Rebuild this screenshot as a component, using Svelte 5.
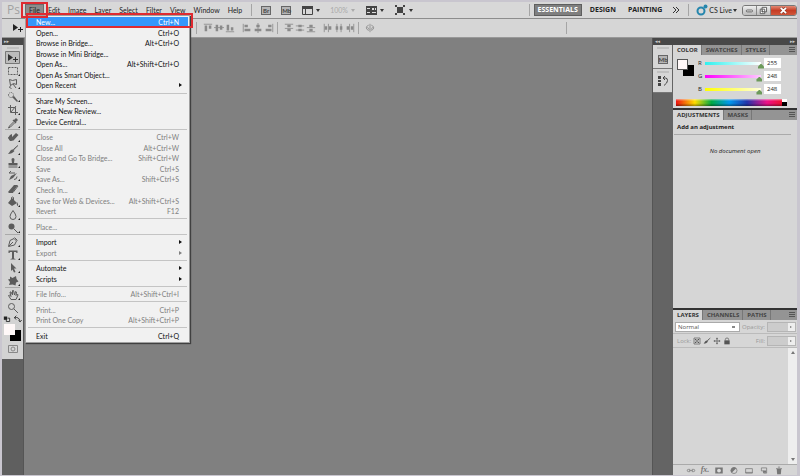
<script>
	const menus = ['File', 'Edit', 'Image', 'Layer', 'Select', 'Filter', 'View', 'Window', 'Help'];

	// label, shortcut, disabled, has submenu
	const fileMenu = [
		[
			['New...', 'Ctrl+N'],
			['Open...', 'Ctrl+O'],
			['Browse in Bridge...', 'Alt+Ctrl+O'],
			['Browse in Mini Bridge...', ''],
			['Open As...', 'Alt+Shift+Ctrl+O'],
			['Open As Smart Object...', ''],
			['Open Recent', '', false, true],
		],
		[
			['Share My Screen...', ''],
			['Create New Review...', ''],
			['Device Central...', ''],
		],
		[
			['Close', 'Ctrl+W', true],
			['Close All', 'Alt+Ctrl+W', true],
			['Close and Go To Bridge...', 'Shift+Ctrl+W', true],
			['Save', 'Ctrl+S', true],
			['Save As...', 'Shift+Ctrl+S', true],
			['Check In...', '', true],
			['Save for Web & Devices...', 'Alt+Shift+Ctrl+S', true],
			['Revert', 'F12', true],
		],
		[['Place...', '', true]],
		[
			['Import', '', false, true],
			['Export', '', true, true],
		],
		[
			['Automate', '', false, true],
			['Scripts', '', false, true],
		],
		[['File Info...', 'Alt+Shift+Ctrl+I', true]],
		[
			['Print...', 'Ctrl+P', true],
			['Print One Copy', 'Alt+Shift+Ctrl+P', true],
		],
		[['Exit', 'Ctrl+Q']],
	];

	// f = filled path, s = stroked path
	const icons = {
		move: { f: 'M1 2l5 3.5-5 3.5z', s: 'M6 7.5h5M8.500 5v5' },
		marquee: { s: 'M1.500 2.500h9v7h-9z', dash: '2 1' },
		lasso: { s: 'M2.500 1.500l3 1 4-1v5l-3-1-3 2zM3.500 7.500l-1 2 2 1M6 6l3 4' },
		quick: { s: 'M1.500 4a2.500 2.500 0 1 1 5 0a2.500 2.500 0 1 1-5 0', f: 'M5 6l2-1 4 5-1 1z', dash: '1 1' },
		crop: { s: 'M3.500 1v7.500H11M1 3.500h7.500V11M4 8l5-6' },
		dropper: { f: 'M7 3l2-2 2 2-2 2 .5.5-1 1-3-3 1-1z', s: 'M6.500 5l-4 4-1 2 2-1 4-4' },
		heal: { f: 'M5 6l4-4 2.500 2-5 5.500L3 10 1 7l2-3 2-1z', s: 'M1.500 6.500l3 3.500' },
		brush: { f: 'M11 1L7 6 6 5.500zM6 5.500L7.500 7Q5 10 1 10 2.500 8 3.500 6.500 5 5 6 5.500z', s: 'M6.500 5.500L11 1.500' },
		stamp: { f: 'M4.500 2.500a1.500 1.500 0 0 1 3 0L7 6h3.500v2.500h-9V6H5zM1.500 9.500h9v1h-9z' },
		history: { f: 'M10 3L6 8 2 10l2-4z', s: 'M2 3h6M2 3l2-2M7 9.500q3 0 3-3' },
		eraser: { f: 'M7 2h4L6 9H1z', s: 'M1.500 9.500H6L11 3' },
		bucket: { f: 'M5 2l5 5-5 3-4-3zM10 6q2 3 .5 4-1-1-.5-4', s: 'M4.500 5V1.500q1-1 2 0V5' },
		blur: { s: 'M6 1.500q-3 4-3 6a3 3 0 0 0 6 0q0-2-3-6z' },
		dodge: { f: 'M1.500 4.500a3 3 0 1 1 6 0a3 3 0 1 1-6 0', s: 'M7 7l4 4' },
		pen: { s: 'M1.500 10.500l1.500-6L7 2.500 9.500 5 7.500 9zM2 10l4-4M7.500 1.500l3 3' },
		type: { f: 'M1.500 1.500h9v2.500h-1l-.5-1H7v6.500l1.500.5v.500h-5v-.5L5 9.500V3H3l-.5 1h-1z' },
		path: { f: 'M4 1l5.500 5.500H7L8.500 10l-1.500.5L5.500 7.500 4 9z' },
		shape: { f: 'M3 1.500l2.500 1.500L9 1l.5 3 2 2.500-2.500 1-.5 3-3-1-3.500.5 1-3L1 4.500 3 4z' },
		hand: { s: 'M4 10.500L1.500 6.500l1-.5L4 7.500 3 3h1l1.500 3V1.500h1L7.500 6 8.500 2.500l1 .5-.5 3.500 1.500-1.500.500 1-2 4.500z' },
		zoom: { s: 'M1.500 4.500a3 3 0 1 1 6 0a3 3 0 1 1-6 0M7 7l4 4' },
		mini: { f: 'M1 3h4v4H1z', s: 'M4 6.500V9h4V5H5.500' },
		swap: { s: 'M2 4.500q5-1.500 6.500 4M4 2L1.500 4.500 4 6.500M6.500 7.500l2 2 2-2' },
		mask: { s: 'M1.500 2.500h9v7h-9zM4 6a2 2 0 1 1 4 0a2 2 0 1 1-4 0' },
		alignTop: { s: 'M1 1.500h10', f: 'M2 3h3v7H2zM7 3h3v4H7z' },
		alignMiddle: { s: 'M0 5.500h12', f: 'M2 2h3v8H2zM7 3h3v5H7z' },
		alignBottom: { s: 'M1 10.500h10', f: 'M2 2h3v7H2zM7 5h3v4H7z' },
		alignLeft: { s: 'M1.500 1v10', f: 'M3 2h4v3H3zM3 7h7v3H3z' },
		alignCenter: { s: 'M6 0v12', f: 'M4 2h4v3H4zM2 7h8v3H2z' },
		alignRight: { s: 'M10.500 1v10', f: 'M5 2h4v3H5zM2 7h7v3H2z' },
		distTop: { s: 'M1 1.500h10M1 6.500h10', f: 'M4 2h4v3H4zM4 7h4v3H4z' },
		distMiddle: { s: 'M1 3.500h10M1 8.500h10', f: 'M4 2h4v3H4zM4 7h4v3H4z' },
		distBottom: { s: 'M1 5.500h10M1 10.500h10', f: 'M4 2h4v3H4zM4 7h4v3H4z' },
		distLeft: { s: 'M1.500 1v10M6.500 1v10', f: 'M2 4h3v4H2zM7 4h3v4H7z' },
		distCenter: { s: 'M3.500 1v10M8.500 1v10', f: 'M2 4h3v4H2zM7 4h3v4H7z' },
		distRight: { s: 'M5.500 1v10M10.500 1v10', f: 'M2 4h3v4H2zM7 4h3v4H7z' },
		auto: { s: 'M6 1v10M4.500 2.500Q1 4 1.500 6t3 3M7.500 2.500Q11 4 10.500 6t-3 3M3 5l2 3M9 5L7.500 8' },
		frames: { s: 'M1.500 2.500h10v8h-10zM4.500 2.500v8M1.500 4.500h10', f: 'M1 2h11v2H1z' },
		arrange: { f: 'M1 2h11v9H1z', hole: 'M7 4h2v2H7zM10 4h1v2h-1zM7 8h4v1H7zM2 4h3v1H2zM2 8h3v1H2z' },
		screen: { f: 'M3 3h6v6H3z', s: 'M1 1.500h2M1.500 1v2M9 1.500h2M10.500 1v2M1 10.500h2M1.500 9v2M9 10.500h2M10.500 9v2M2 2l2 2M10 2L8 4M2 10l2-2M10 10L8 8' },
		link: { s: 'M5 4.500H2.500a1.500 1.500 0 0 0 0 3H5M7 4.500h2.500a1.500 1.500 0 0 1 0 3H7M3.500 6h5' },
		maskFill: { f: 'M1 2h10v8H1z', hole: 'M3.500 6a2.500 2.500 0 1 1 5 0a2.500 2.500 0 1 1-5 0' },
		adjust: { s: 'M2 6a4 4 0 1 1 8 0a4 4 0 1 1-8 0', f: 'M9 3L3 9A4 4 0 0 1 9 3z' },
		folder: { s: 'M1.500 3.500h9v6h-9zM1.500 8.500h9' },
		page: { s: 'M2.500 2.500h7v7h-4v-3h-3z', f: 'M5 6h4v3H5z' },
		trash: { f: 'M3 4h6L8.500 11h-5z', s: 'M2 3.500h8M4.500 1.500h3' },
		checker: { s: 'M1.500 1.500h9v9h-9z', f: 'M3 3h2v2H3zM7 3h2v2H7zM5 5h2v2H5zM3 7h2v2H3zM7 7h2v2H7z' },
		cross: { s: 'M6 1v10M1 6h10M4.500 2.500h3M4.500 9.500h3M2.500 4.500v3M9.500 4.500v3' },
		lock: { f: 'M2 5h8v6H2z', s: 'M3.500 5V3.500q0-2 2.500-2t2.500 2V5' },
		paragraph: { f: 'M1 1h3v3H1zM1 5h3v2H1zM1 8h3v3H1z', s: 'M6 3h2.500q2 0 2 2.500T7 10.500M8 1L6 3l2 2' },
	};

	const tools = [
		['move', 'marquee', 'lasso', 'quick', 'crop', 'dropper'],
		['heal', 'brush', 'stamp', 'history', 'eraser', 'bucket', 'blur', 'dodge'],
		['pen', 'type', 'path', 'shape'],
		['hand', 'zoom'],
	];

	const aligns = [
		['alignTop', 'alignMiddle', 'alignBottom'],
		['alignLeft', 'alignCenter', 'alignRight'],
	];

	const distributes = [
		['distTop', 'distMiddle', 'distBottom'],
		['distLeft', 'distCenter', 'distRight'],
	];

	let channels = $state([
		{ name: 'R', value: 255 },
		{ name: 'G', value: 248 },
		{ name: 'B', value: 248 },
	]);
</script>

{#snippet icon(name)}
	<svg class="icon" viewBox="0 0 12 12" aria-hidden="true">
		{#if icons[name].f}<path d={icons[name].f} fill="currentColor" />{/if}
		{#if icons[name].hole}<path d={icons[name].hole} fill="#dcdcdc" />{/if}
		{#if icons[name].s}<path d={icons[name].s} fill="none" stroke="currentColor" stroke-dasharray={icons[name].dash} />{/if}
	</svg>
{/snippet}

{#snippet sets(groups)}
	{#each groups as set}
		<div class="set">
			{#each set as name}<button aria-label={name}>{@render icon(name)}</button>{/each}
		</div>
	{/each}
{/snippet}

{#snippet tabs(names)}
	<div class="tabs" role="tablist">
		{#each names as name, i}
			<button role="tab" aria-selected={i === 0}>{name}</button>
		{/each}
		<button class="flyout" aria-label="Panel menu"></button>
	</div>
{/snippet}

<div class="app">
	<header class="menubar">
		<span class="ps">Ps</span>
		<nav class="menus">
			{#each menus as name, i}
				<div class="menu-item">
					<button class:open={i === 0}>{name}</button>
					{#if i === 0}
						<div class="marker file-marker"></div>
						<div class="dropdown" role="menu">
							{#each fileMenu as group, g}
								{#if g > 0}<hr />{/if}
								{#each group as [label, keys, disabled, sub]}
									<button role="menuitem" class:active={label === 'New...'} {disabled}>
										<span>{label}</span>
										<span class:sub>{keys}</span>
									</button>
								{/each}
							{/each}
							<div class="marker new-marker"></div>
						</div>
					{/if}
				</div>
			{/each}
		</nav>
		<i class="rule"></i>
		<div class="appbar">
			<button class="tile">Br</button>
			<button class="tile">Mb</button>
			<button class="drop" aria-label="View extras">{@render icon('frames')}</button>
			<button class="drop faint">100%</button>
			<button class="drop" aria-label="Arrange documents">{@render icon('arrange')}</button>
			<button class="drop" aria-label="Screen mode">{@render icon('screen')}</button>
		</div>
		<div class="workspaces">
			<i class="rule"></i>
			<button class="current">ESSENTIALS</button>
			<button>DESIGN</button>
			<button>PAINTING</button>
			<button class="more" aria-label="More workspaces">
				<svg viewBox="0 0 8 8" aria-hidden="true"><path d="M1 1l3 3-3 3M4 1l3 3-3 3" fill="none" stroke="#333" /></svg>
			</button>
		</div>
		<i class="rule"></i>
		<button class="cslive drop">
			<svg viewBox="0 0 12 12" aria-hidden="true">
				<circle cx="5" cy="7" r="3.500" fill="none" stroke="#2586ad" stroke-width="2" />
				<circle cx="9.500" cy="2.500" r="2" fill="#2586ad" />
			</svg>
			CS Live
		</button>
		<div class="window-buttons">
			<button aria-label="Minimize"><svg viewBox="0 0 12 10"><rect x="2.500" y="4.500" width="7" height="2" rx="1" fill="#fff" stroke="#555" /></svg></button>
			<button aria-label="Restore"><svg viewBox="0 0 12 10"><path d="M4.500 1.500h5v5h-5zM2.500 3.500h5v5h-5zM4.500 5.500h1v1h-1z" fill="#fff" stroke="#555" /></svg></button>
			<button class="close" aria-label="Close"><svg viewBox="0 0 12 10"><path d="M3 2l6 6M9 2L3 8" stroke="#803428" stroke-width="3" /><path d="M3 2l6 6M9 2L3 8" stroke="#fff" stroke-width="2" /></svg></button>
		</div>
	</header>

	<div class="options">
		<span class="current-tool">{@render icon('move')}</span>
		<i class="rule"></i>
		{@render sets(aligns)}
		<i class="rule"></i>
		{@render sets(distributes)}
		<i class="rule"></i>
		{@render sets([['auto']])}
		<i class="rule last"></i>
	</div>

	<main>
		<aside class="tools">
			<div class="strip"><span>▸▸</span></div>
			<div class="toolbox">
				{#each tools as group, g}
					{#if g > 0}<hr />{/if}
					{#each group as name}
						<button class="tool" class:selected={name === 'move'} class:corner={name !== 'move' && name !== 'zoom'} aria-label={name}>
							{@render icon(name)}
						</button>
					{/each}
				{/each}
				<div class="mini">{@render icon('mini')}{@render icon('swap')}</div>
				<div class="swatches"><b></b><i></i></div>
				<button class="tool quickmask" aria-label="Quick mask">{@render icon('mask')}</button>
			</div>
		</aside>

		<section class="canvas"></section>

		<div class="docks">
			<div class="strip"><span>◂◂</span><span>▸▸</span></div>
			<div class="columns">
				<aside class="icon-dock">
					<button aria-label="Mini Bridge"><span class="tile">Mb</span></button>
					<button aria-label="History">{@render icon('paragraph')}</button>
				</aside>
				<aside class="panels">
					<section class="panel color">
						{@render tabs(['COLOR', 'SWATCHES', 'STYLES'])}
						<div class="sliders">
							<div class="swatches"><b></b><i></i></div>
							<div class="channels">
								{#each channels as c}
									<div class="channel">
										<label for="ch-{c.name}">{c.name}</label>
										<div class="track {c.name}">
											<input type="range" min="0" max="255" aria-label="{c.name} level" bind:value={c.value} />
										</div>
										<input id="ch-{c.name}" class="number" type="text" bind:value={c.value} />
									</div>
								{/each}
							</div>
						</div>
						<div class="ramp"><span></span></div>
					</section>

					<section class="panel adjustments">
						{@render tabs(['ADJUSTMENTS', 'MASKS'])}
						<h2>Add an adjustment</h2>
						<p>No document open</p>
					</section>

					<section class="panel layers">
						{@render tabs(['LAYERS', 'CHANNELS', 'PATHS'])}
						<div class="row">
							<select aria-label="Blend mode"><option>Normal</option></select>
							<label for="opacity">Opacity:</label>
							<span class="amount"><input id="opacity" disabled /><i></i></span>
						</div>
						<div class="row locks">
							<span>Lock:</span>
							{#each ['checker', 'brush', 'cross', 'lock'] as name}
								<button aria-label="Lock {name}">{@render icon(name)}</button>
							{/each}
							<label for="fill">Fill:</label>
							<span class="amount"><input id="fill" disabled /><i></i></span>
						</div>
						<div class="list"><div class="scroll"></div></div>
						<footer>
							<button aria-label="Link layers">{@render icon('link')}</button>
							<button class="fx">fx.</button>
							{#each ['maskFill', 'adjust', 'folder', 'page', 'trash'] as name}
								<button aria-label={name}>{@render icon(name)}</button>
							{/each}
						</footer>
					</section>
				</aside>
			</div>
		</div>
	</main>
</div>

<style>
	:global(body) {
		background: #808080;
	}

	.app {
		display: flex;
		flex-direction: column;
		box-sizing: border-box;
		min-height: 100vh;
		border: solid #c9c6cf;
		border-width: 2px 3px 1px 2px;
		font: 7px/10px Lato, "Open Sans", sans-serif;
		color: #222;
	}

	button, input, select {
		box-sizing: border-box;
		margin: 0;
		padding: 0;
		border: 0;
		background: none;
		font: inherit;
		color: inherit;
	}

	hr {
		margin: 0;
		border: 0;
	}

	.icon {
		display: block;
		width: 12px;
		height: 12px;
	}

	.rule {
		width: 1px;
		height: 12px;
		background: #a5a5a5;
	}

	.menubar {
		display: flex;
		align-items: center;
		height: 16px;
		background: #d8d8d8;
		border-bottom: 1px solid #8d8d8d;
	}

	.ps {
		width: 23px;
		padding-left: 5px;
		box-sizing: border-box;
		font-family: "Open Sans", sans-serif;
		font-size: 12px;
		color: #a2a2a2;
	}

	.menus {
		display: flex;
		margin-right: 5px;
	}

	.menu-item {
		position: relative;
	}

	.menu-item > button {
		padding: 0 4px;
		line-height: 12px;
	}

	.menu-item > .open {
		background: #8c8c8c;
		box-shadow: inset 0 0 0 1px #6c6c6c;
	}

	.marker {
		position: absolute;
		border: 2px solid #df2a30;
		pointer-events: none;
	}

	.file-marker {
		inset: -2px -4px;
		z-index: 3;
	}

	.dropdown {
		position: absolute;
		top: 11px;
		left: 0;
		z-index: 2;
		display: flex;
		flex-direction: column;
		box-sizing: border-box;
		width: 165px;
		height: 328px;
		padding: 1px;
		background: #f1f1f1;
		border: 1px solid #a0a0a0;
		box-shadow: 1px 1px 1px #404040;
	}

	.dropdown button {
		display: flex;
		flex: 1;
		align-items: center;
		justify-content: space-between;
		padding: 0 9px;
		min-height: 0;
		line-height: 10px;
		color: #111;
	}

	.dropdown button:disabled {
		color: #808080;
	}

	.dropdown .active {
		background: #3597fb;
		color: #fff;
	}

	.dropdown hr {
		height: 1px;
		margin: 2px 1px;
		background: #c4c4c4;
	}

	.sub::after {
		content: "";
		display: block;
		margin-right: -5px;
		border: 2px solid transparent;
		border-left: 3px solid;
		border-right: 0;
	}

	.new-marker {
		top: -3px;
		left: 0;
		right: -4px;
		height: 11px;
	}

	.appbar {
		display: flex;
		align-items: center;
		gap: 10px;
		margin-left: 9px;
		color: #444;
	}

	.tile {
		width: 10px;
		height: 9px;
		background: #b5b5b5;
		border: 1px solid #666;
		font-size: 6px;
		font-weight: 700;
		line-height: 7px;
	}

	.drop {
		display: flex;
		align-items: center;
		gap: 3px;
	}

	.drop::after {
		content: "";
		border: 2px solid transparent;
		border-top: 3px solid #333;
		border-bottom: 0;
	}

	.faint {
		color: #aaa;
	}

	.faint::after {
		border-top-color: #aaa;
	}

	.workspaces {
		display: flex;
		align-items: center;
		gap: 4px;
		margin: 0 4px 0 auto;
		font-family: "Open Sans", sans-serif;
		font-weight: 700;
	}

	.workspaces button {
		padding: 0 4px;
		line-height: 12px;
	}

	.workspaces .current {
		background: #7f7f7f;
		box-shadow: inset 0 0 0 1px #5e5e5e;
		color: #fff;
	}

	.workspaces .more {
		padding-left: 2px;
	}

	.more svg {
		display: block;
		width: 8px;
		height: 8px;
	}

	.cslive {
		margin: 0 5px 0 7px;
		gap: 1px;
	}

	.cslive svg {
		width: 12px;
		height: 12px;
	}

	.window-buttons {
		display: flex;
		border: 1px solid #777;
		border-radius: 3px;
		overflow: hidden;
	}

	.window-buttons button {
		width: 14px;
		height: 9px;
		background: linear-gradient(#eee, #bbb);
		border-right: 1px solid #888;
	}

	.window-buttons .close {
		width: 25px;
		background: linear-gradient(#e28a76, #c63d25 50%, #d0563b);
		border: 0;
	}

	.window-buttons svg {
		display: block;
		height: 9px;
		margin: auto;
	}

	.options {
		display: flex;
		align-items: center;
		height: 18px;
		background: #d6d6d6;
		border-bottom: 1px solid #999;
		color: #8a8a8a;
	}

	.options .set .icon {
		width: 10px;
		height: 10px;
	}

	.current-tool {
		width: 184px;
		padding-left: 10px;
		color: #222;
	}

	.set {
		display: flex;
		gap: 1px;
		margin: 0 1px 0 6px;
	}

	.options .rule {
		margin-left: 2px;
	}

	.options .current-tool + .rule {
		margin-left: 0;
	}

	.options .last {
		margin-left: 190px;
	}

	main {
		display: flex;
		flex: 1;
	}

	.strip {
		display: flex;
		justify-content: space-between;
		height: 7px;
		padding: 0 2px;
		background: #484848;
		color: #ccc;
		font: 5px/6px "DejaVu Sans", sans-serif;
	}

	.tools {
		width: 21px;
		background: #5f5f5f;
		border-right: 1px solid #555;
	}

	.toolbox {
		display: flex;
		flex-direction: column;
		align-items: center;
		padding: 0 0 4px;
		background: #d3d3d3;
	}

	.toolbox::before, .icon-dock button::before {
		content: "";
		width: 12px;
		height: 2px;
		margin: 2px 0;
		background: #c0c0c0;
	}

	.toolbox hr {
		width: 15px;
		height: 1px;
		background: #aaa;
	}

	.tool {
		position: relative;
		display: grid;
		place-items: center;
		width: 15px;
		height: 13px;
		color: #5c5c5c;
	}

	.selected {
		background: #bcbcbc;
		box-shadow: inset 0 0 0 1px #777;
		border-radius: 1px;
		color: #333;
	}

	.corner::after {
		content: "";
		position: absolute;
		right: 0;
		bottom: 1px;
		border: 1px solid #222;
		border-top-color: transparent;
		border-left-color: transparent;
	}

	.mini {
		display: flex;
		color: #222;
	}

	.mini .icon {
		width: 10px;
		height: 10px;
	}

	.swatches {
		display: grid;
		width: 17px;
		height: 17px;
	}

	.swatches b, .swatches i {
		grid-area: 1 / 1;
		width: 11px;
		height: 11px;
	}

	.swatches b {
		z-index: 1;
		background: #fff8f8;
	}

	.swatches i {
		place-self: end;
		background: #000;
	}

	.quickmask {
		margin-top: 1px;
		color: #888;
	}

	.canvas {
		flex: 1;
		background: #808080;
	}

	.docks {
		display: flex;
		flex-direction: column;
		box-sizing: border-box;
		width: 145px;
		border-left: 1px solid #555;
		font-family: "Open Sans", sans-serif;
		font-size: 6px;
	}

	.columns {
		display: flex;
		flex: 1;
	}

	.icon-dock {
		width: 20px;
		background: #646464;
	}

	.icon-dock button {
		display: flex;
		flex-direction: column;
		align-items: center;
		width: 19px;
		height: 24px;
		background: #d6d6d6;
		border-bottom: 1px solid #777;
		color: #444;
	}

	.icon-dock .tile {
		box-sizing: border-box;
		margin-top: 4px;
		font-family: Lato, sans-serif;
	}

	.panels {
		display: flex;
		flex: 1;
		flex-direction: column;
		gap: 2px;
		background: #333;
	}

	.panel {
		background: #d6d6d6;
	}

	.tabs {
		display: flex;
		height: 10px;
		background: #949494;
		font-weight: 700;
		line-height: 10px;
	}

	.tabs button {
		padding: 0 3px 0 4px;
		border-right: 1px solid #777;
		color: #444;
	}

	.tabs [aria-selected="true"] {
		background: #d6d6d6;
		color: #333;
	}

	.tabs .flyout {
		width: 6px;
		height: 5px;
		margin: 2px 2px 0 auto;
		padding: 0;
		border: 0;
		background: repeating-linear-gradient(#555 0 1px, transparent 1px 2px);
	}

	.sliders {
		display: flex;
		gap: 4px;
		padding: 3px 16px 5px 4px;
	}

	.sliders .swatches {
		margin-top: 1px;
	}

	.sliders b {
		box-sizing: border-box;
		border: 1px solid #555;
	}

	.channels {
		display: flex;
		flex: 1;
		flex-direction: column;
		gap: 3px;
	}

	.channel {
		display: flex;
		align-items: center;
	}

	.channel label {
		width: 5px;
		margin-right: 2px;
	}

	.track {
		position: relative;
		flex: 1;
		height: 3px;
	}

	.track.R { background: linear-gradient(90deg, #2ff1ef, #fff); }
	.track.G { background: linear-gradient(90deg, #f0f, #fcf); }
	.track.B { background: linear-gradient(90deg, #ff0, #ffd); }

	.track input {
		position: absolute;
		inset: 2px -3px auto;
		width: calc(100% + 6px);
		height: 5px;
		appearance: none;
	}

	.track input::-webkit-slider-thumb {
		appearance: none;
		width: 6px;
		height: 5px;
		background: #6c9a5a;
		clip-path: polygon(50% 0, 100% 60%, 100% 100%, 0 100%, 0 60%);
	}

	.number {
		width: 17px;
		height: 10px;
		margin-left: 3px;
		padding-left: 3px;
		background: #fff;
	}

	.ramp {
		height: 7px;
		margin: 0 10px 0 3px;
		display: flex;
		justify-content: flex-end;
		background:
			linear-gradient(#fff8, transparent 30%, transparent 60%, #0006),
			linear-gradient(90deg, #e11, #fd0 17%, #0a4 32%, #09e 48%, #23a 64%, #e18 82%, #e11);
	}

	.ramp span {
		width: 5px;
		background: linear-gradient(#fff 50%, #000 50%);
	}

	.color {
		padding-bottom: 2px;
	}

	.adjustments {
		flex: 6;
	}

	h2 {
		margin: 0 6px 0 1px;
		padding: 0 3px;
		border-bottom: 1px solid #aaa;
		font-size: 6px;
		line-height: 14px;
	}

	p {
		margin: 11px 0;
		font-style: italic;
		text-align: center;
	}

	.layers {
		display: flex;
		flex: 5;
		flex-direction: column;
	}

	.row {
		display: flex;
		align-items: center;
		height: 13px;
		padding: 0 1px 0 2px;
		border-bottom: 1px solid #bbb;
		color: #999;
	}

	.row select {
		width: 65px;
		height: 10px;
		margin-right: 2px;
		padding: 0 2px;
		appearance: none;
		border: 1px solid #aaa;
		background: linear-gradient(#888, #888) 94% 50% / 3px 2px no-repeat, #fff;
		line-height: 8px;
		color: #555;
	}

	.amount {
		display: flex;
		width: 27px;
		height: 8px;
		margin-left: auto;
		border: 1px solid #b5b5b5;
	}

	.amount input {
		flex: 1;
		min-width: 0;
		background: #ccc;
	}

	.amount i {
		display: grid;
		place-items: center;
		width: 7px;
		background: #eee;
	}

	.amount i::before {
		content: "";
		border: 1px solid transparent;
		border-left: 2px solid #777;
	}

	.locks {
		gap: 2px;
		padding-left: 4px;
	}

	.locks button {
		width: 8px;
		color: #555;
	}

	.locks .icon {
		width: 8px;
		height: 8px;
	}

	.locks label {
		margin-left: auto;
	}

	.locks .amount {
		margin-left: 0;
	}

	.list {
		display: flex;
		flex: 1;
		justify-content: flex-end;
	}

	.scroll {
		display: flex;
		width: 9px;
		flex-direction: column;
		align-items: center;
		justify-content: space-between;
		background: #eee;
	}

	.scroll::before, .scroll::after {
		content: "";
		margin: 3px;
		border: 2px solid transparent;
		border-top: 0;
		border-bottom: 3px solid #777;
	}

	.scroll::after {
		border-top: 3px solid #777;
		border-bottom: 0;
	}

	footer {
		display: flex;
		gap: 5px;
		justify-content: center;
		height: 10px;
		border-top: 1px solid #aaa;
		color: #777;
		line-height: 8px;
	}

	footer .icon {
		width: 10px;
		height: 9px;
	}

	.fx {
		font: italic 700 8px/8px "Liberation Serif", serif;
	}
</style>
